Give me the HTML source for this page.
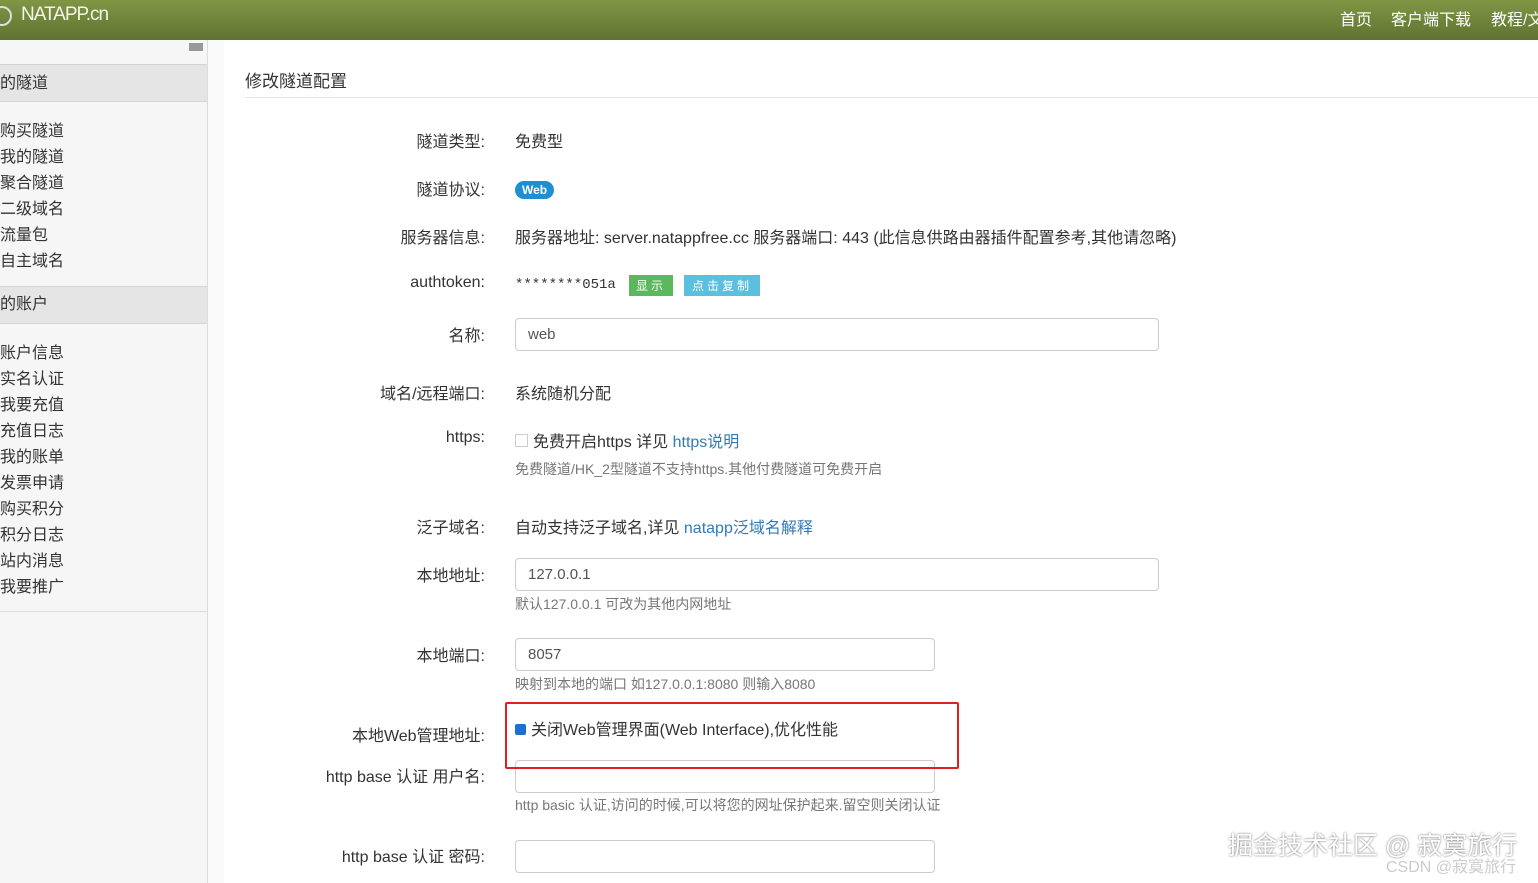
<!DOCTYPE html><html><head><meta charset="utf-8"><style>
body{margin:0;width:1538px;height:883px;overflow:hidden;font-family:"Liberation Sans","Noto Sans CJK SC",sans-serif;color:#333;background:#fff;position:relative;font-size:16px}
.hd{position:absolute;left:0;top:0;width:1538px;height:40px;background:linear-gradient(#809645,#5f7330);overflow:hidden}
.hd .logo{position:absolute;left:21px;top:4px;color:#f4f4e8;font-size:19px;letter-spacing:-1px}
.hd .nav{position:absolute;top:6px;color:#fff;font-size:16px;white-space:nowrap}
.sb{position:absolute;left:0;top:40px;width:207px;height:843px;background:#f6f6f6;border-right:1px solid #ddd}
.sb .g{position:absolute;left:0;width:207px;height:36px;background:#e5e5e5;border-top:1px solid #d5d5d5;border-bottom:1px solid #d5d5d5;line-height:36px;font-size:16px}
.sb .i{position:absolute;left:0;font-size:16px}
.a{position:absolute;white-space:nowrap}
.l{position:absolute;right:1053px;white-space:nowrap}
.in{position:absolute;left:515px;height:33px;border:1px solid #ccc;border-radius:4px;box-sizing:border-box;padding-left:12px;line-height:31px;font-size:15px;color:#555}
.h{position:absolute;left:515px;font-size:14px;color:#777}
a{color:#337ab7;text-decoration:none}
</style></head><body>
<div class="hd"><span style="position:absolute;left:-8px;top:6px;width:16px;height:16px;border:2px solid #ddd;border-radius:50%"></span><div class="logo">NATAPP.cn</div>
<div class="nav" style="left:1340px">首页</div><div class="nav" style="left:1391px">客户端下载</div><div class="nav" style="left:1491px">教程/文档</div></div>
<div class="sb">
<div style="position:absolute;left:189px;top:3px;width:14px;height:8px;background:#999"></div>
<div class="g" style="top:24px;line-height:38px">的隧道</div>
<div class="i" style="top:77px">购买隧道</div><div class="i" style="top:103px">我的隧道</div><div class="i" style="top:129px">聚合隧道</div><div class="i" style="top:155px">二级域名</div><div class="i" style="top:181px">流量包</div><div class="i" style="top:207px">自主域名</div>
<div class="g" style="top:246px">的账户</div>
<div class="i" style="top:299px">账户信息</div><div class="i" style="top:325px">实名认证</div><div class="i" style="top:351px">我要充值</div><div class="i" style="top:377px">充值日志</div><div class="i" style="top:403px">我的账单</div><div class="i" style="top:429px">发票申请</div><div class="i" style="top:455px">购买积分</div><div class="i" style="top:481px">积分日志</div><div class="i" style="top:507px">站内消息</div><div class="i" style="top:533px">我要推广</div>
<div style="position:absolute;left:0;top:571px;width:207px;border-top:1px solid #ddd"></div>
</div>
<div style="position:absolute;left:208px;top:40px;width:16px;height:843px;background:#fafafa"></div>
<div class="a" style="left:245px;top:67px;font-size:17px">修改隧道配置</div>
<div style="position:absolute;left:245px;top:97px;width:1293px;border-top:1px solid #e5e5e5"></div>
<div class="l" style="top:128px">隧道类型:</div><div class="a" style="left:515px;top:128px">免费型</div>
<div class="l" style="top:176px">隧道协议:</div><div class="a" style="left:515px;top:181px;background:#1e8fd0;color:#fff;font-weight:bold;font-size:12px;padding:2px 7px;border-radius:9px">Web</div>
<div class="l" style="top:224px">服务器信息:</div><div class="a" style="left:515px;top:224px">服务器地址: server.natappfree.cc 服务器端口: 443 (此信息供路由器插件配置参考,其他请忽略)</div>
<div class="l" style="top:274px">authtoken:</div><div class="a" style="left:515px;top:277px;font-family:'Liberation Mono',monospace;font-size:14px">********051a</div>
<div class="a" style="left:629px;top:275px;background:#5cb85c;color:#fff;font-size:12px;padding:2px 7px;letter-spacing:3px">显示</div>
<div class="a" style="left:684px;top:275px;background:#5bc0de;color:#fff;font-size:12px;padding:2px 8px;letter-spacing:3px">点击复制</div>
<div class="l" style="top:322px">名称:</div><div class="in" style="top:318px;width:644px">web</div>
<div class="l" style="top:380px">域名/远程端口:</div><div class="a" style="left:515px;top:380px">系统随机分配</div>
<div class="l" style="top:429px">https:</div><div class="a" style="left:515px;top:428px"><span style="display:inline-block;width:11px;height:11px;border:1px solid #ccc;margin-right:5px"></span>免费开启https 详见 <a>https说明</a></div>
<div class="h" style="top:459px">免费隧道/HK_2型隧道不支持https.其他付费隧道可免费开启</div>
<div class="l" style="top:514px">泛子域名:</div><div class="a" style="left:515px;top:514px">自动支持泛子域名,详见 <a>natapp泛域名解释</a></div>
<div class="l" style="top:562px">本地地址:</div><div class="in" style="top:558px;width:644px">127.0.0.1</div>
<div class="h" style="top:594px">默认127.0.0.1 可改为其他内网地址</div>
<div class="l" style="top:642px">本地端口:</div><div class="in" style="top:638px;width:420px">8057</div>
<div class="h" style="top:674px">映射到本地的端口 如127.0.0.1:8080 则输入8080</div>
<div class="l" style="top:722px">本地Web管理地址:</div>
<div class="a" style="left:515px;top:716px"><span style="display:inline-block;width:11px;height:11px;background:#1e6fd0;border-radius:2px;margin-right:5px"></span>关闭Web管理界面(Web Interface),优化性能</div>
<div class="l" style="top:763px">http base 认证 用户名:</div><div class="in" style="top:760px;width:420px"></div>
<div style="position:absolute;left:505px;top:702px;width:450px;height:63px;border:2px solid #e02020;border-radius:2px"></div>
<div class="h" style="top:795px">http basic 认证,访问的时候,可以将您的网址保护起来.留空则关闭认证</div>
<div class="l" style="top:843px">http base 认证 密码:</div><div class="in" style="top:840px;width:420px"></div>
<div class="a" style="left:1228px;top:826px;font-size:25px;color:#fff;text-shadow:0 0 2px #666">掘金技术社区 @ 寂寞旅行</div>
<div class="a" style="left:1386px;top:853px;font-size:16px;color:#ccc">CSDN @寂寞旅行</div>
</body></html>
